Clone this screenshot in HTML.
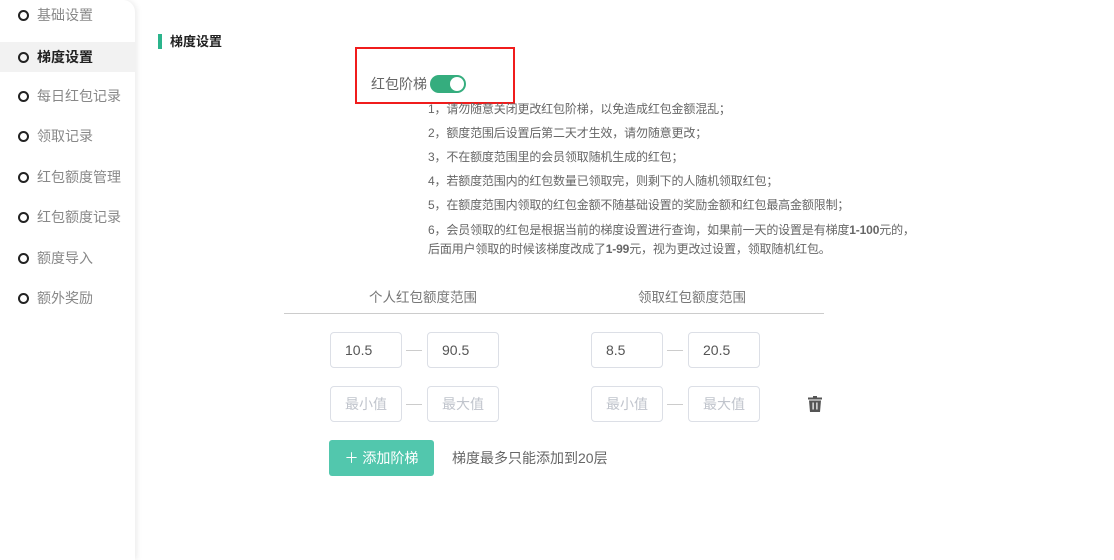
<!DOCTYPE html>
<html><head><meta charset="utf-8"><style>
*{margin:0;padding:0;box-sizing:border-box}
body{width:1114px;height:560px;position:relative;background:#fff;font-family:"Liberation Sans","Noto Sans CJK SC",sans-serif;overflow:hidden}
.a{position:absolute;white-space:nowrap}
.side{position:absolute;left:0;top:0;width:135px;height:560px;background:#fff;box-shadow:2px 0 6px rgba(0,0,0,.08);border-top-right-radius:12px}
.it{position:absolute;left:0;width:135px;height:30px;font-size:14px;color:#888;line-height:30px}
.it i{position:absolute;left:18px;top:10px;width:11px;height:11px;border:2px solid #222;border-radius:50%}
.it span{position:absolute;left:37px}
.n{font-size:12px;color:#666;left:428px;letter-spacing:-0.15px}
.in{position:absolute;width:72px;height:36px;border:1px solid #dcdfe6;border-radius:4px;font-size:14px;color:#555;line-height:34px;padding-left:14px}
.ph{color:#c0c4cc}
.dash{position:absolute;width:16px;height:1px;background:#ccc}
</style></head><body>
<div class="side">
<div class="it" style="top:0"><i></i><span>基础设置</span></div>
<div class="it" style="top:42px;background:#f2f2f2;color:#222;font-weight:bold"><i></i><span>梯度设置</span></div>
<div class="it" style="top:81px"><i></i><span>每日红包记录</span></div>
<div class="it" style="top:121px"><i></i><span>领取记录</span></div>
<div class="it" style="top:162px"><i></i><span>红包额度管理</span></div>
<div class="it" style="top:202px"><i></i><span>红包额度记录</span></div>
<div class="it" style="top:243px"><i></i><span>额度导入</span></div>
<div class="it" style="top:283px"><i></i><span>额外奖励</span></div>
</div>
<div class="a" style="left:158px;top:34px;width:4px;height:15px;background:#2bb48c"></div>
<div class="a" style="left:170px;top:31px;font-size:13px;font-weight:bold;color:#222">梯度设置</div>
<div class="a" style="left:355px;top:47px;width:160px;height:57px;border:2px solid #f01c1c"></div>
<div class="a" style="left:371px;top:74px;font-size:14px;color:#666">红包阶梯</div>
<div class="a" style="left:430px;top:75px;width:36px;height:18px;border-radius:9px;background:#35ad7e"></div>
<div class="a" style="left:450px;top:77px;width:14px;height:14px;border-radius:50%;background:#fff"></div>
<div class="a n" style="top:100px">1，请勿随意关闭更改红包阶梯，以免造成红包金额混乱；</div>
<div class="a n" style="top:124px">2，额度范围后设置后第二天才生效，请勿随意更改；</div>
<div class="a n" style="top:148px">3，不在额度范围里的会员领取随机生成的红包；</div>
<div class="a n" style="top:172px">4，若额度范围内的红包数量已领取完，则剩下的人随机领取红包；</div>
<div class="a n" style="top:196px">5，在额度范围内领取的红包金额不随基础设置的奖励金额和红包最高金额限制；</div>
<div class="a n" style="top:221px">6，会员领取的红包是根据当前的梯度设置进行查询，如果前一天的设置是有梯度<b>1-100</b>元的，</div>
<div class="a n" style="top:240px">后面用户领取的时候该梯度改成了<b>1-99</b>元，视为更改过设置，领取随机红包。</div>
<div class="a" style="left:369px;top:286px;font-size:13.5px;color:#777">个人红包额度范围</div>
<div class="a" style="left:638px;top:286px;font-size:13.5px;color:#777">领取红包额度范围</div>
<div class="a" style="left:284px;top:313px;width:540px;height:1px;background:#ccc"></div>
<div class="in" style="left:330px;top:332px">10.5</div><div class="dash" style="left:406px;top:350px"></div><div class="in" style="left:427px;top:332px">90.5</div>
<div class="in" style="left:591px;top:332px">8.5</div><div class="dash" style="left:667px;top:350px"></div><div class="in" style="left:688px;top:332px">20.5</div>
<div class="in ph" style="left:330px;top:386px">最小值</div><div class="dash" style="left:406px;top:404px"></div><div class="in ph" style="left:427px;top:386px">最大值</div>
<div class="in ph" style="left:591px;top:386px">最小值</div><div class="dash" style="left:667px;top:404px"></div><div class="in ph" style="left:688px;top:386px">最大值</div>
<svg class="a" style="left:808px;top:396px" width="14" height="16" viewBox="0 0 14 16"><rect x="0" y="1.5" width="14" height="2" fill="#555"/><rect x="5" y="0" width="4" height="2" fill="#555"/><path d="M1 4.5h12l-1 11.5H2z" fill="#555"/><rect x="4.5" y="6.5" width="1.2" height="7" fill="#fff"/><rect x="8.3" y="6.5" width="1.2" height="7" fill="#fff"/></svg>
<div class="a" style="left:329px;top:440px;width:105px;height:36px;border-radius:3px;background:#52c7ad;color:#fff;font-size:14px;line-height:36px;text-align:center">＋ 添加阶梯</div>
<div class="a" style="left:452px;top:448px;font-size:14px;color:#666">梯度最多只能添加到20层</div>
</body></html>
